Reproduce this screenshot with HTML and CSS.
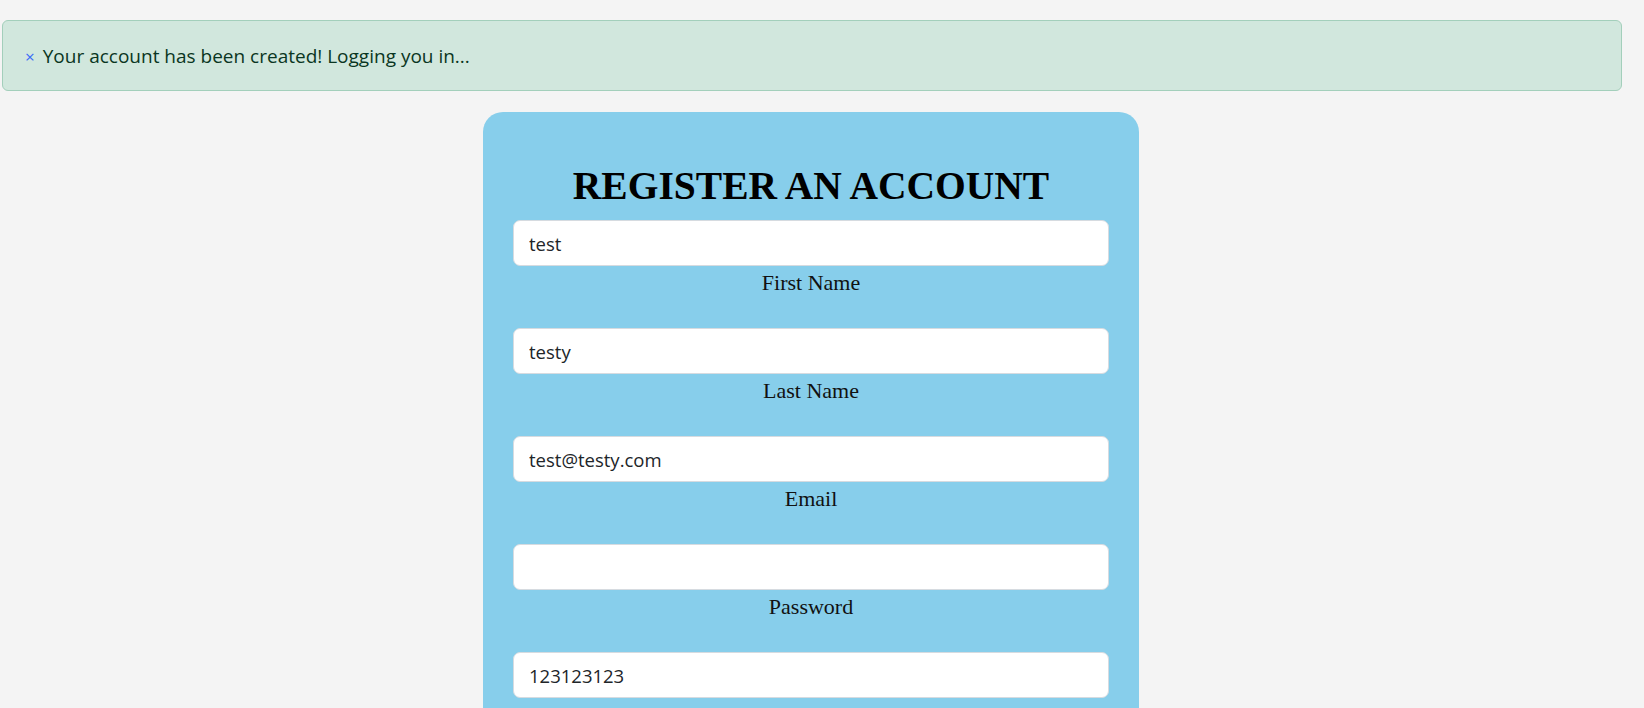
FILE: index.html
```html
<!DOCTYPE html>
<html lang="en">
<head>
<meta charset="utf-8">
<title>Register</title>
<link rel="stylesheet" href="styles.css">
</head>
<body>
  <div class="alert">
    <span class="alert-close">×</span><span class="alert-text">Your account has been created! Logging you in...</span>
  </div>
  <div class="card">
    <h1 class="card-title">REGISTER AN ACCOUNT</h1>
    <div class="field">
      <input class="field-input" type="text" value="test">
      <label class="field-label">First Name</label>
    </div>
    <div class="field">
      <input class="field-input" type="text" value="testy">
      <label class="field-label">Last Name</label>
    </div>
    <div class="field">
      <input class="field-input" type="email" value="test@testy.com">
      <label class="field-label">Email</label>
    </div>
    <div class="field">
      <input class="field-input" type="password" value="">
      <label class="field-label">Password</label>
    </div>
    <div class="field">
      <input class="field-input" type="text" value="123123123">
      <label class="field-label">Phone Number</label>
    </div>
  </div>
</body>
</html>
```
FILE: styles.css
```css
html, body {
  margin: 0;
  padding: 0;
  background: #f4f4f4;
  overflow: hidden;
}
body {
  height: 708px;
  font-family: "Open Sans", "Noto Sans", sans-serif;
}
.alert {
  box-sizing: border-box;
  margin: 20px 22px 0 2px;
  height: 71px;
  padding: 20px 24px 19px 22px;
  background: #d1e7dd;
  border: 1px solid #a3cfbb;
  border-radius: 6px;
  color: #0a3622;
  font-size: 19px;
  line-height: 30px;
  display: flex;
  align-items: baseline;
}
.alert-close {
  color: #3b6cf6;
  font-size: 17px;
  margin-right: 8px;
}
.card {
  box-sizing: border-box;
  width: 656px;
  margin: 21px 0 0 483px;
  padding: 51px 30px 30px;
  background: #87ceeb;
  border-radius: 20px;
  display: flex;
  flex-direction: column;
}
.card-title {
  margin: 0 0 10px;
  font-family: "Liberation Serif", serif;
  font-weight: 700;
  font-size: 39.5px;
  line-height: 47px;
  text-align: center;
  color: #000;
}
.field {
  display: flex;
  flex-direction: column;
  margin-bottom: 29px;
}
.field-input {
  box-sizing: border-box;
  height: 46px;
  width: 100%;
  padding: 0 15px;
  border: 1px solid #d6dbe0;
  border-radius: 7px;
  background: #fff;
  font-family: "Open Sans", "Noto Sans", sans-serif;
  font-size: 18.5px;
  color: #212529;
  outline: none;
}
.field-label {
  font-family: "Liberation Serif", serif;
  font-size: 22px;
  line-height: 33px;
  text-align: center;
  color: #111;
}
```
